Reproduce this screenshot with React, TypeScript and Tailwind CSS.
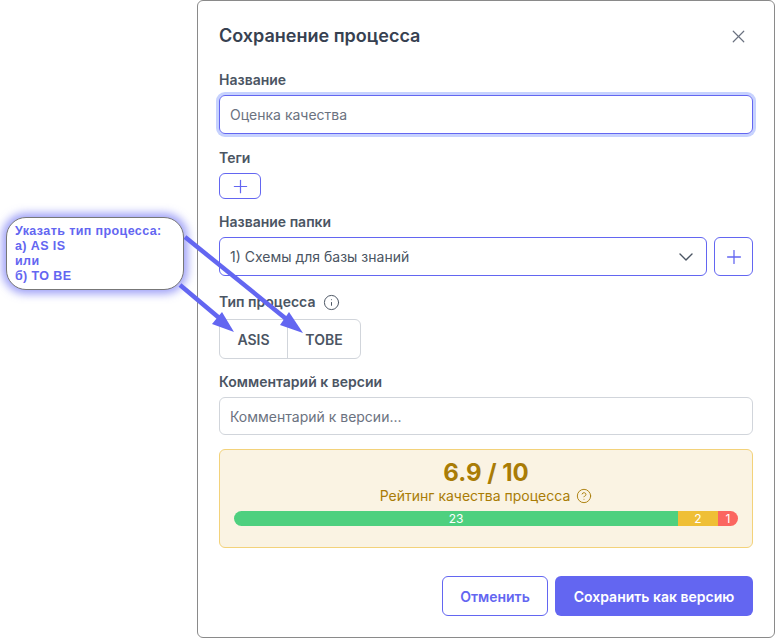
import React from 'react';
import { X, Plus, ChevronDown, Info, CircleHelp } from 'lucide-react';

const Label = ({ children }: { children: React.ReactNode }) => (
  <div className="text-[14px] leading-[20px] font-semibold text-[#4b5563]">{children}</div>
);

const App = () => {
  return (
    <div className="relative w-[775px] h-[638px] overflow-hidden bg-white font-['Inter','Noto_Sans',sans-serif]">
      <div className="ml-[197px] w-[578px] h-[638px] bg-white border border-[#8a8a8a] rounded-[6px] px-[21px] pt-[24px] flex flex-col">
        {/* Header */}
        <div className="flex items-center justify-between h-[22px]">
          <h2 className="text-[18px] leading-[22px] font-semibold text-[#374151]">Сохранение процесса</h2>
          <button className="mr-[4px] text-[#6b7280]">
            <X className="w-[21px] h-[21px]" strokeWidth={1.4} />
          </button>
        </div>

        <div className="mt-[23px]">
          <Label>Название</Label>
          <div className="mt-[5px] h-[39px] flex items-center px-[10px] border border-[#6366f1] rounded-[6px] ring-[3px] ring-[#c7d2fe] text-[14px] text-[#6b7280]">
            Оценка качества
          </div>
        </div>

        <div className="mt-[14px]">
          <Label>Теги</Label>
          <button className="mt-[5px] w-[42px] h-[26px] flex items-center justify-center border border-[#6366f1] rounded-[6px] text-[#6366f1]">
            <Plus className="w-[21px] h-[21px]" strokeWidth={1.4} />
          </button>
        </div>

        <div className="mt-[13px]">
          <Label>Название папки</Label>
          <div className="mt-[5px] flex gap-[7px]">
            <div className="w-[488px] h-[39px] flex items-center justify-between pl-[10px] pr-[8px] border border-[#6366f1] rounded-[6px] text-[14px] text-[#4b5563]">
              <span>1) Схемы для базы знаний</span>
              <ChevronDown className="w-[24px] h-[24px] text-[#4b5563]" strokeWidth={1.4} />
            </div>
            <button className="w-[39px] h-[39px] flex items-center justify-center border border-[#6366f1] rounded-[6px] text-[#6366f1]">
              <Plus className="w-[22px] h-[22px]" strokeWidth={1.4} />
            </button>
          </div>
        </div>

        <div className="mt-[16px]">
          <div className="flex items-center gap-[8px]">
            <Label>Тип процесса</Label>
            <Info className="w-[17px] h-[17px] text-[#4b5563]" strokeWidth={1.4} />
          </div>
          <div className="mt-[7px] flex w-[142px] h-[40px] border border-[#d1d5db] rounded-[6px] text-[14px] font-semibold text-[#4b5563]">
            <div className="w-[68px] flex items-center justify-center border-r border-[#d1d5db]">ASIS</div>
            <div className="flex-1 flex items-center justify-center">TOBE</div>
          </div>
        </div>

        <div className="mt-[13px]">
          <Label>Комментарий к версии</Label>
          <div className="mt-[5px] h-[38px] flex items-center px-[10px] border border-[#d1d5db] rounded-[6px] text-[14px] text-[#6b7280]">
            Комментарий к версии...
          </div>
        </div>

        {/* Rating */}
        <div className="mt-[14px] h-[99px] bg-[#faf3e3] border border-[#f3d27a] rounded-[6px] px-[14px] pt-[8px]">
          <div className="text-center text-[24px] leading-[30px] font-bold text-[#a97c06]">6.9 / 10</div>
          <div className="-mt-[2px] flex items-center justify-center gap-[6px] text-[14px] leading-[20px] text-[#a97c06]">
            <span>Рейтинг качества процесса</span>
            <CircleHelp className="w-[16px] h-[16px]" strokeWidth={1.4} />
          </div>
          <div className="mt-[5px] flex h-[15px] rounded-full overflow-hidden text-[12px] leading-[15px] text-white text-center">
            <div className="w-[444px] bg-[#4ed07f]">23</div>
            <div className="w-[40px] bg-[#efbf36]">2</div>
            <div className="flex-1 bg-[#fb6660]">1</div>
          </div>
        </div>

        {/* Footer */}
        <div className="mt-[28px] flex justify-end gap-[7px] text-[14px] font-semibold">
          <button className="w-[106px] h-[40px] border border-[#6366f1] rounded-[6px] text-[#6366f1]">Отменить</button>
          <button className="w-[198px] h-[40px] bg-[#6366f1] rounded-[6px] text-white">Сохранить как версию</button>
        </div>
      </div>

      {/* Annotation */}
      <div className="absolute left-[6px] top-[217px] w-[178px] h-[73px] bg-white border border-[#777] rounded-[20px] shadow-[0_0_8px_4px_rgba(99,102,241,0.6)] pl-[8px] pt-[6px] text-[12.5px] leading-[15px] tracking-[0.4px] font-bold text-[#6366f1] font-['Liberation_Sans',sans-serif]">
        <div>Указать тип процесса:</div>
        <div>а) AS IS</div>
        <div>или</div>
        <div>б) TO BE</div>
      </div>
      <svg className="absolute left-0 top-0 pointer-events-none" width="775" height="638">
        <line x1="185" y1="237" x2="290" y2="322" stroke="#6366f1" strokeWidth="4.5" />
        <polygon points="303,333 280,325 289,312" fill="#6366f1" />
        <line x1="180" y1="285" x2="224" y2="322" stroke="#6366f1" strokeWidth="4.5" />
        <polygon points="234,332 212,324 222,312" fill="#6366f1" />
      </svg>
    </div>
  );
};

export default App;
